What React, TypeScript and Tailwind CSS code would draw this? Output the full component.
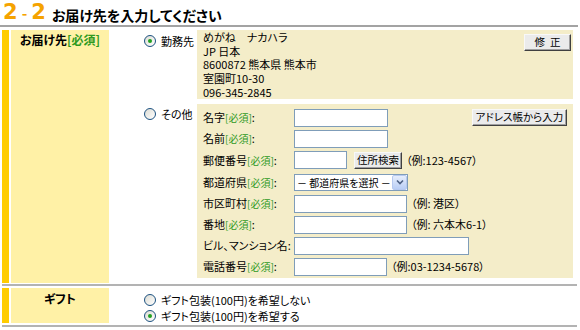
import React from 'react';

const Req = () => <span className="text-[#2f9a1f] text-[10px]">[必須]</span>;

const Radio = ({ checked }: { checked?: boolean }) => (
  <span className="w-[12px] h-[12px] rounded-full border border-[#1c5180] bg-gradient-to-br from-[#dcdcd4] to-white flex items-center justify-center shrink-0">
    {checked && <span className="w-[4px] h-[4px] rounded-full bg-[#21a121]" />}
  </span>
);

const Btn = ({ children, className = '' }: { children: React.ReactNode; className?: string }) => (
  <button className={`h-[17px] px-0 whitespace-nowrap bg-[#ebebeb] border border-t-[#f8f8f8] border-l-[#f8f8f8] border-r-[#404040] border-b-[#404040] shadow-[inset_-1px_-1px_0_#a0a0a0] text-[10.5px] leading-none text-black flex items-center justify-center shrink-0 ${className}`}>
    {children}
  </button>
);

const Input = ({ w }: { w: string }) => (
  <span className={`${w} h-[18px] bg-white border border-[#7f9db9] shrink-0 block`} />
);

const Field = ({ label, req = true, children, h = 'h-[21px]' }: { label: string; req?: boolean; children: React.ReactNode; h?: string }) => (
  <div className={`flex items-center ${h}`}>
    <div className="w-[91px] shrink-0 text-[11px] whitespace-nowrap">
      {label}
      {req && <Req />}:
    </div>
    {children}
  </div>
);

const Hint = ({ children }: { children: React.ReactNode }) => (
  <span className="ml-[4px] text-[11px] whitespace-nowrap">{children}</span>
);

export default function App() {
  return (
    <div className="w-[580px] h-[330px] bg-white text-black font-['Noto_Sans_CJK_JP',sans-serif] [font-feature-settings:'palt'] text-[11px] overflow-hidden">
      {/* title */}
      <div className="h-[27px] flex items-end pb-[2px] pl-[3px] border-b-2 border-[#a3a3a3] w-[578px]">
        <span className="text-[#f5a300] font-bold text-[21px] leading-none font-['DejaVu_Sans',sans-serif]">2</span>
        <span className="text-[#f5a300] font-bold text-[15px] leading-none mx-[4px] mb-[3px]">-</span>
        <span className="text-[#f5a300] font-bold text-[21px] leading-none font-['DejaVu_Sans',sans-serif]">2</span>
        <span className="ml-[6px] font-bold text-[14px] leading-none mb-[1px]">お届け先を入力してください</span>
      </div>

      {/* row: delivery */}
      <div className="mt-[3px] flex h-[253px] pl-[2px]">
        <div className="w-[7px] bg-[#ffcc00]" />
        <div className="w-[98px] ml-[2px] bg-[#fff1a6] text-center font-bold text-[12px] pt-[3px] leading-[14px]">
          お届け先<span className="text-[#2f9a1f]">[必須]</span>
        </div>
        <div className="w-[464px] flex flex-col">
          <div className="flex h-[69px]">
            <div className="w-[88px] flex items-start pl-[35px] pt-[5px] gap-[5px]">
              <Radio checked />
              <span className="text-[11px] leading-[12px] whitespace-nowrap">勤務先</span>
            </div>
            <div className="flex-1 bg-[#f4edc9] flex justify-between pl-[6px] pr-[2px]">
              <div className="leading-[13.7px] pt-[1px] text-[11px]">
                <div>めがね　ナカハラ</div>
                <div>JP 日本</div>
                <div>8600872 熊本県 熊本市</div>
                <div>室園町10-30</div>
                <div>096-345-2845</div>
              </div>
              <Btn className="mt-[4px] w-[47px] tracking-[5px] pl-[5px]">修正</Btn>
            </div>
          </div>
          <div className="flex mt-[5px] h-[174px]">
            <div className="w-[88px] flex items-start pl-[35px] pt-[4px] gap-[5px]">
              <Radio />
              <span className="text-[11px] leading-[12px] whitespace-nowrap">その他</span>
            </div>
            <div className="flex-1 bg-[#f4edc9] flex flex-col pl-[6px] pt-[3px] pr-[6px]">
              <Field label="名字">
                <Input w="w-[94px]" />
                <Btn className="ml-auto w-[95px]">アドレス帳から入力</Btn>
              </Field>
              <Field label="名前">
                <Input w="w-[94px]" />
              </Field>
              <Field label="郵便番号" h="h-[22px]">
                <Input w="w-[53px]" />
                <Btn className="ml-[7px] w-[48px]">住所検索</Btn>
                <Hint>（例:123-4567）</Hint>
              </Field>
              <Field label="都道府県" h="h-[22px]">
                <span className="w-[114px] h-[17px] bg-white border border-[#7f9db9] flex items-center justify-between text-[10px] pl-[2px]">
                  <span className="whitespace-nowrap">－ 都道府県を選択 －</span>
                  <span className="w-[15px] h-[15px] bg-gradient-to-b from-[#e6eefc] to-[#b9cdf5] border border-[#b6c9f0] rounded-[2px] flex items-center justify-center shrink-0">
                    <svg width="8" height="6" viewBox="0 0 8 6">
                      <path d="M1 1.5 L4 4.5 L7 1.5" stroke="#4d6185" strokeWidth="1.6" fill="none" />
                    </svg>
                  </span>
                </span>
              </Field>
              <Field label="市区町村">
                <Input w="w-[113px]" />
                <Hint>（例: 港区）</Hint>
              </Field>
              <Field label="番地">
                <Input w="w-[113px]" />
                <Hint>（例: 六本木6-1）</Hint>
              </Field>
              <Field label="ビル、マンション名" req={false}>
                <Input w="w-[175px]" />
              </Field>
              <Field label="電話番号">
                <Input w="w-[93px]" />
                <Hint>（例:03-1234-5678）</Hint>
              </Field>
            </div>
          </div>
        </div>
      </div>

      <div className="ml-[2px] w-[575px] mt-[1px] border-t-2 border-[#b3b3b3]" />

      {/* row: gift */}
      <div className="mt-[2px] flex h-[35px] pl-[2px]">
        <div className="w-[7px] bg-[#ffcc00]" />
        <div className="w-[98px] ml-[2px] bg-[#fff1a6] text-center font-bold text-[12px] pt-[4px] leading-[14px]">
          ギフト
        </div>
        <div className="flex flex-col pl-[35px] pt-[6px] gap-[4px]">
          <div className="flex items-center gap-[5px]">
            <Radio />
            <span className="text-[11px] leading-[12px] whitespace-nowrap">ギフト包装(100円)を希望しない</span>
          </div>
          <div className="flex items-center gap-[5px]">
            <Radio checked />
            <span className="text-[11px] leading-[12px] whitespace-nowrap">ギフト包装(100円)を希望する</span>
          </div>
        </div>
      </div>
      <div className="ml-[2px] w-[575px] mt-[2px] border-t-2 border-[#b3b3b3]" />
    </div>
  );
}
